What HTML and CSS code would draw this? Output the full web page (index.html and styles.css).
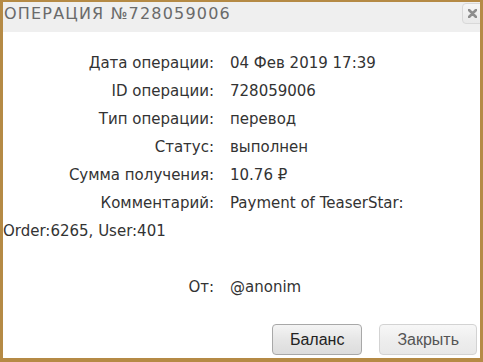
FILE: index.html
```html
<!DOCTYPE html>
<html lang="ru">
<head>
  <meta charset="utf-8">
  <title>Операция №728059006</title>
  <link rel="stylesheet" href="styles.css">
</head>
<body>
  <div class="dialog">
    <div class="titlebar">
      <span class="title">Операция №728059006</span>
      <button class="close" type="button" title="Закрыть">
        <svg width="9" height="9" viewBox="0 0 9 9"><path d="M1 1L8 8M8 1L1 8" stroke="#8e8e8e" stroke-width="2.6" stroke-linecap="round"/></svg>
      </button>
    </div>
    <div class="content">
      <div class="row"><span class="label">Дата операции:</span>04 Фев 2019 17:39</div>
      <div class="row"><span class="label">ID операции:</span>728059006</div>
      <div class="row"><span class="label">Тип операции:</span>перевод</div>
      <div class="row"><span class="label">Статус:</span>выполнен</div>
      <div class="row"><span class="label">Сумма получения:</span>10.76 &#8381;</div>
      <div class="row"><span class="label">Комментарий:</span>Payment of TeaserStar:<br>Order:6265, User:401</div>
      <div class="row empty"></div>
      <div class="row"><span class="label">От:</span>@anonim</div>
    </div>
    <div class="buttons">
      <button type="button" class="btn">Баланс</button>
      <button type="button" class="btn light">Закрыть</button>
    </div>
  </div>
</body>
</html>
```

FILE: styles.css
```css
body {
  margin: 0;
  padding: 0;
  background-color: #fff;
}
.dialog {
  width: 483px;
  height: 362px;
  box-sizing: border-box;
  border: 3px solid #b58a45;
  border-top-width: 2px;
  border-bottom-width: 4px;
  background-color: #fff;
  overflow: hidden;
  display: flex;
  flex-direction: column;
}
.titlebar {
  height: 30px;
  background-color: #efefef;
  display: flex;
  align-items: flex-start;
  justify-content: space-between;
  padding-left: 1px;
}
.title {
  font-family: "DejaVu Sans", sans-serif;
  font-size: 16px;
  letter-spacing: 1.2px;
  text-transform: uppercase;
  color: #6a6a6a;
  line-height: 24px;
}
.close {
  width: 24px;
  height: 21px;
  margin-top: 1px;
  margin-right: -6px;
  padding: 0 3px 0 0;
  border: 1px solid #d8d8d8;
  border-radius: 4px;
  background: linear-gradient(#f6f6f6, #e9e9e9);
  display: flex;
  align-items: center;
  justify-content: center;
}
.content {
  padding-top: 17px;
  font-family: "DejaVu Sans", sans-serif;
  font-size: 15px;
  line-height: 28px;
  color: #333;
}
.row {
  min-height: 28px;
}
.label {
  display: inline-block;
  width: 211px;
  margin-right: 16px;
  text-align: right;
}
.buttons {
  margin-top: auto;
  padding: 0 3px 3px 0;
  display: flex;
  justify-content: flex-end;
  gap: 17px;
}
.btn {
  height: 31px;
  padding: 0 17px;
  font-family: "Liberation Sans", Arial, sans-serif;
  font-size: 16px;
  color: #222;
  border: 1px solid #a8a8a8;
  border-radius: 4px;
  background: linear-gradient(#f4f4f4, #e6e6e6 50%, #dcdcdc);
}
.btn.light {
  color: #555;
  border-color: #d3d3d3;
  background: linear-gradient(#f7f7f7, #eeeeee 50%, #e8e8e8);
}
```
